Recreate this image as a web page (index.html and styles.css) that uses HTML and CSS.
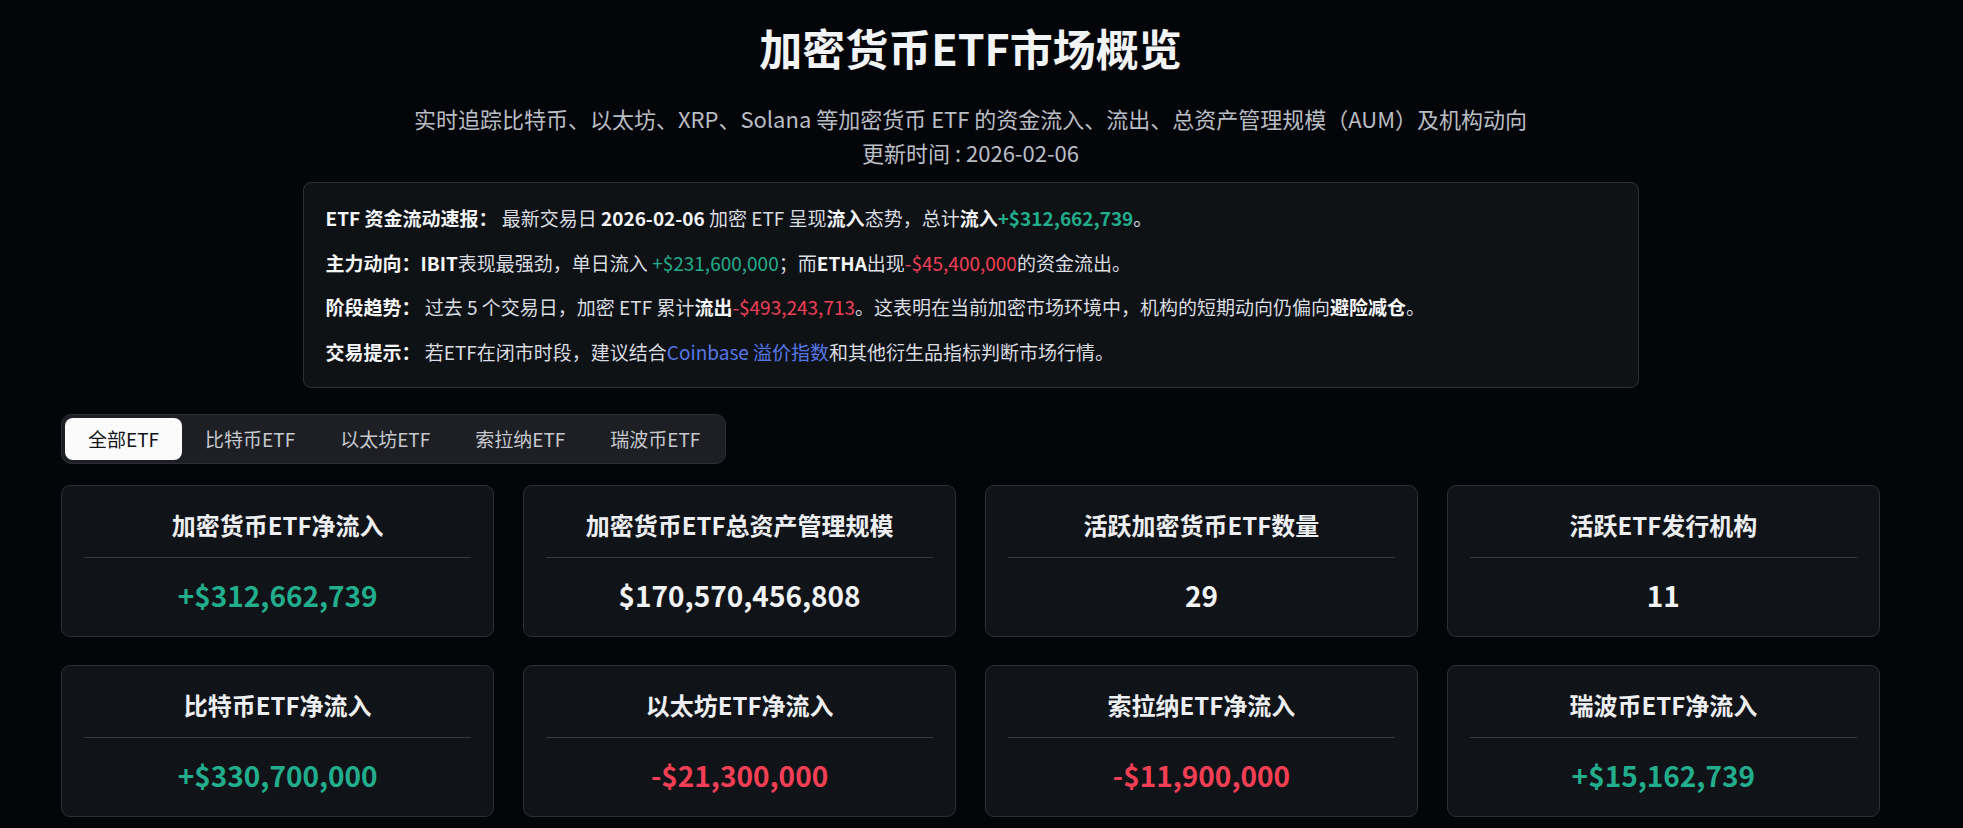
FILE: index.html
```html
<!DOCTYPE html>
<html lang="zh-CN">
<head>
<meta charset="utf-8">
<title>加密货币ETF市场概览</title>
<link rel="stylesheet" href="styles.css">
</head>
<body>
<div class="page">
  <header class="hero">
    <h1 class="hero-title">加密货币ETF市场概览</h1>
    <p class="hero-sub">实时追踪比特币、以太坊、XRP、Solana 等加密货币 ETF 的资金流入、流出、总资产管理规模（AUM）及机构动向</p>
    <p class="hero-sub">更新时间 : 2026-02-06</p>
  </header>

  <section class="brief">
    <p class="brief-line"><b>ETF 资金流动速报：</b> 最新交易日 <b>2026-02-06</b> 加密 ETF 呈现<b>流入</b>态势，总计<b>流入</b><span class="up strong">+$312,662,739</span>。</p>
    <p class="brief-line"><b>主力动向：IBIT</b>表现最强劲，单日流入 <span class="up">+$231,600,000</span>；而<b>ETHA</b>出现<span class="down">-$45,400,000</span>的资金流出。</p>
    <p class="brief-line"><b>阶段趋势：</b> 过去 5 个交易日，加密 ETF 累计<b>流出</b><span class="down">-$493,243,713</span>。这表明在当前加密市场环境中，机构的短期动向仍偏向<b>避险减仓</b>。</p>
    <p class="brief-line"><b>交易提示：</b> 若ETF在闭市时段，建议结合<a class="link" href="#">Coinbase 溢价指数</a>和其他衍生品指标判断市场行情。</p>
  </section>

  <main class="content">
    <nav class="tabs">
      <span class="tab active">全部ETF</span>
      <span class="tab">比特币ETF</span>
      <span class="tab">以太坊ETF</span>
      <span class="tab">索拉纳ETF</span>
      <span class="tab">瑞波币ETF</span>
    </nav>

    <div class="grid">
      <div class="card">
        <div class="card-title">加密货币ETF净流入</div>
        <div class="card-rule"></div>
        <div class="card-value up">+$312,662,739</div>
      </div>
      <div class="card">
        <div class="card-title">加密货币ETF总资产管理规模</div>
        <div class="card-rule"></div>
        <div class="card-value">$170,570,456,808</div>
      </div>
      <div class="card">
        <div class="card-title">活跃加密货币ETF数量</div>
        <div class="card-rule"></div>
        <div class="card-value">29</div>
      </div>
      <div class="card">
        <div class="card-title">活跃ETF发行机构</div>
        <div class="card-rule"></div>
        <div class="card-value">11</div>
      </div>
      <div class="card">
        <div class="card-title">比特币ETF净流入</div>
        <div class="card-rule"></div>
        <div class="card-value up">+$330,700,000</div>
      </div>
      <div class="card">
        <div class="card-title">以太坊ETF净流入</div>
        <div class="card-rule"></div>
        <div class="card-value down">-$21,300,000</div>
      </div>
      <div class="card">
        <div class="card-title">索拉纳ETF净流入</div>
        <div class="card-rule"></div>
        <div class="card-value down">-$11,900,000</div>
      </div>
      <div class="card">
        <div class="card-title">瑞波币ETF净流入</div>
        <div class="card-rule"></div>
        <div class="card-value up">+$15,162,739</div>
      </div>
    </div>
  </main>
</div>
</body>
</html>
```

FILE: styles.css
```css
* { box-sizing: border-box; }

html, body {
  margin: 0;
  padding: 0;
  background: #040509;
}

body {
  font-family: "Noto Sans CJK SC", "Noto Sans", sans-serif;
  color: #e6e8eb;
}

.page {
  padding: 21px 22px 40px 0;
}

.hero {
  text-align: center;
}

.hero-title {
  margin: 0;
  font-size: 43px;
  line-height: 53px;
  font-weight: 700;
  color: #f2f3f5;
}

.hero-sub {
  margin: 0;
  font-size: 22px;
  line-height: 34px;
  color: #b9bdc4;
}

.hero-title + .hero-sub {
  margin-top: 27px;
}

.brief {
  width: 1336px;
  margin: 13px auto 0;
  padding: 13px 22px;
  background: #0f1215;
  border: 1px solid #2b2f36;
  border-radius: 8px;
}

.brief-line {
  margin: 0;
  font-size: 19px;
  line-height: 44.5px;
  color: #d9dce0;
  white-space: nowrap;
}

.brief-line b {
  font-weight: 700;
  color: #f4f5f7;
}

.up { color: #22ad8c; }
.down { color: #f23f55; }
.strong { font-weight: 700; }

.link {
  color: #5676e8;
  text-decoration: none;
}

.content {
  width: 1819px;
  margin: 26px auto 0;
}

.tabs {
  display: inline-flex;
  gap: 1px;
  padding: 3px;
  background: #1d1f24;
  border: 1px solid #2a2d33;
  border-radius: 10px;
}

.tab {
  padding: 0 22px;
  height: 42px;
  line-height: 42px;
  font-size: 19px;
  color: #c6c9ce;
  border-radius: 8px;
}

.tab.active {
  padding: 0 23px;
  background: #fbfbfc;
  color: #111317;
}

.grid {
  margin-top: 21px;
  display: grid;
  grid-template-columns: repeat(4, 1fr);
  column-gap: 28.5px;
  row-gap: 28px;
}

.card {
  height: 152px;
  padding: 21px 22px 23px;
  background: #101317;
  border: 1px solid #2b2f36;
  border-radius: 9px;
  text-align: center;
}

.card-title {
  font-size: 24px;
  line-height: 36px;
  font-weight: 600;
  color: #eceef1;
}

.card-rule {
  height: 1px;
  margin: 14px 0 19px;
  background: #34383f;
}

.card-value {
  font-size: 28px;
  line-height: 36px;
  font-weight: 700;
  color: #f1f3f5;
}

.card-value.up { color: #22ad8c; }
.card-value.down { color: #f23f55; }
```
